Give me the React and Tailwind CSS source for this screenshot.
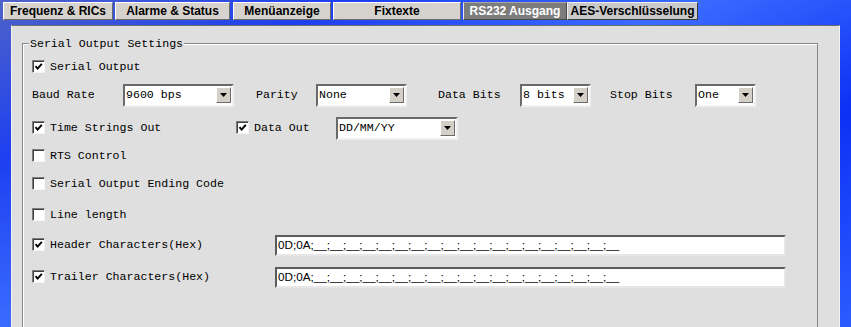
import React from 'react';

const mono = "font-['Liberation_Mono','Courier_New',monospace]";

const tabs = [
    { label: 'Frequenz & RICs', w: 'w-[110px]', ml: 'ml-[3px]' },
    { label: 'Alarme & Status', w: 'w-[115px]', ml: 'ml-[2px]' },
    { label: 'Menüanzeige', w: 'w-[98px]', ml: 'ml-[3px]' },
    { label: 'Fixtexte', w: 'w-[128px]', ml: 'ml-[2px]' },
    { label: 'RS232 Ausgang', w: 'w-[104px]', ml: 'ml-[2px]', active: true },
    { label: 'AES-Verschlüsselung', w: 'w-[131px]', ml: 'ml-0', last: true },
];

const Tab = ({ label, w, ml, active, last }) => {
    let cls = 'bg-[#d6d3ce] text-black border-t-white border-l-white border-r-[#6b6b6b] border-b-[#6b6b6b]';
    if (active) cls = 'bg-[#7c7c7c] text-white border-t-[#a8a8a8] border-l-[#e8e8e8] border-r-[#4a4a4a] border-b-[#4a4a4a]';
    if (last) cls = 'bg-[#c9c9c9] text-black border-t-[#eeeeee] border-l-[#eeeeee] border-r-[#3c3c3c] border-b-[#3c3c3c]';
    return (
        <div className={`${w} ${ml} h-[18px] border flex items-center justify-center text-[12px] font-bold leading-none font-['Liberation_Sans',Arial,sans-serif] ${cls}`}>
            {label}
        </div>
    );
};

const CheckBox = ({ checked }) => (
    <div className="w-[13px] h-[13px] shrink-0 bg-white border border-t-[#7b7b7b] border-l-[#7b7b7b] border-r-[#f4f4f4] border-b-[#f4f4f4] shadow-[inset_1px_1px_0_#404040] flex items-center justify-center">
        {checked && (
            <svg width="9" height="9" viewBox="0 0 9 9">
                <path d="M1.5 4.2 L3.6 6.6 L7.8 1.8" fill="none" stroke="#000" strokeWidth="2" />
            </svg>
        )}
    </div>
);

const Check = ({ checked, label, className = '' }) => (
    <div className={`flex items-center gap-[5px] ${className}`}>
        <CheckBox checked={checked} />
        <span>{label}</span>
    </div>
);

const Select = ({ value, w }) => (
    <div className={`${w} h-[23px] shrink-0 bg-white border-2 border-t-[#6a6a6a] border-l-[#6a6a6a] border-r-[#f0f0f0] border-b-[#f0f0f0] flex items-center justify-between pl-[1px] pr-[1px]`}>
        <span className="leading-none">{value}</span>
        <div className="w-[15px] h-[16px] bg-[#d4d0c8] border border-t-white border-l-white border-r-[#6b6b6b] border-b-[#6b6b6b] flex items-center justify-center">
            <svg width="7" height="4" viewBox="0 0 7 4">
                <polygon points="0,0 7,0 3.5,4" fill="#000" />
            </svg>
        </div>
    </div>
);

const HexField = () => (
    <div className="w-[511px] h-[21px] bg-white border-2 border-t-[#5a5a5a] border-l-[#5a5a5a] border-r-[#e6e6e6] border-b-[#e6e6e6] flex items-center pl-[1px] text-[11.7px] font-['Liberation_Sans',Arial,sans-serif] leading-none">
        {'0D;0A;' + '__;'.repeat(18) + '__'}
    </div>
);

export default function App() {
    return (
        <div className="w-[851px] h-[327px] overflow-hidden flex flex-col bg-[linear-gradient(155deg,#4f63c9_0%,#1d3ff0_22%,#3a6bff_45%,#0d30f5_70%,#2c5cff_100%)]">
            <div className="flex pt-[2px] shrink-0">
                {tabs.map((t) => (
                    <Tab key={t.label} {...t} />
                ))}
            </div>
            <div className="ml-[11px] mt-[5px] w-[829px] flex-1 bg-[#dfdfdf] border-t border-t-[#6e6e6e] border-l border-l-[#f2f2f2] border-r border-r-[#f2f2f2] pt-[17px] pl-[10px]">
                <div className={`relative w-[796px] h-[320px] border border-[#878787] shadow-[inset_1px_1px_0_#ffffff] pt-[11px] pl-[9px] text-[11.6px] text-black ${mono}`}>
                    <span className="absolute -top-[7px] left-[6px] bg-[#dfdfdf] px-[1px] leading-[14px]">
                        Serial Output Settings
                    </span>

                    <div className="h-[24px] flex items-center">
                        <Check checked label="Serial Output" />
                    </div>

                    <div className="h-[24px] mt-[4px] flex items-center">
                        <span className="w-[91px]">Baud Rate</span>
                        <Select value="9600 bps" w="w-[111px]" />
                        <span className="ml-[22px] w-[60px]">Parity</span>
                        <Select value="None" w="w-[91px]" />
                        <span className="ml-[31px] w-[82px]">Data Bits</span>
                        <Select value="8 bits" w="w-[71px]" />
                        <span className="ml-[19px] w-[85px]">Stop Bits</span>
                        <Select value="One" w="w-[61px]" />
                    </div>

                    <div className="h-[24px] mt-[9px] flex items-center">
                        <Check checked label="Time Strings Out" className="w-[204px]" />
                        <Check checked label="Data Out" className="w-[100px] gap-[4px]" />
                        <Select value="DD/MM/YY" w="w-[122px]" />
                    </div>

                    <div className="h-[24px] mt-[4px] flex items-center">
                        <Check label="RTS Control" />
                    </div>

                    <div className="h-[24px] mt-[4px] flex items-center">
                        <Check label="Serial Output Ending Code" />
                    </div>

                    <div className="h-[24px] mt-[7px] flex items-center">
                        <Check label="Line length" />
                    </div>

                    <div className="h-[24px] mt-[6px] flex items-center">
                        <Check checked label="Header Characters(Hex)" className="w-[243px]" />
                        <HexField />
                    </div>

                    <div className="h-[24px] mt-[8px] flex items-center">
                        <Check checked label="Trailer Characters(Hex)" className="w-[243px]" />
                        <HexField />
                    </div>
                </div>
            </div>
        </div>
    );
}
